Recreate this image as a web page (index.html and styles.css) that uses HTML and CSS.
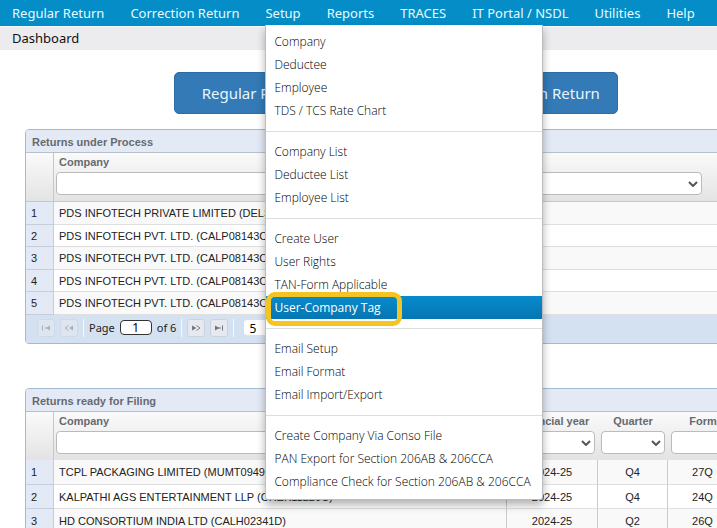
FILE: index.html
```html
<!DOCTYPE html>
<html lang="en">
<head>
<meta charset="utf-8">
<title>Dashboard</title>
<link rel="stylesheet" href="styles.css">
</head>
<body>
<nav class="topnav">
  <ul class="topnav-list">
    <li><a href="#">Regular Return</a></li>
    <li><a href="#">Correction Return</a></li>
    <li class="has-menu"><a href="#">Setup</a>
      <div class="menu">
        <ul>
          <li><a href="#">Company</a></li>
          <li><a href="#">Deductee</a></li>
          <li><a href="#">Employee</a></li>
          <li><a href="#">TDS / TCS Rate Chart</a></li>
        </ul>
        <ul>
          <li><a href="#">Company List</a></li>
          <li><a href="#">Deductee List</a></li>
          <li><a href="#">Employee List</a></li>
        </ul>
        <ul>
          <li><a href="#">Create User</a></li>
          <li><a href="#">User Rights</a></li>
          <li><a href="#">TAN-Form Applicable</a></li>
          <li><a href="#" class="active">User-Company Tag</a></li>
        </ul>
        <ul>
          <li><a href="#">Email Setup</a></li>
          <li><a href="#">Email Format</a></li>
          <li><a href="#">Email Import/Export</a></li>
        </ul>
        <ul>
          <li><a href="#">Create Company Via Conso File</a></li>
          <li><a href="#">PAN Export for Section 206AB &amp; 206CCA</a></li>
          <li><a href="#">Compliance Check for Section 206AB &amp; 206CCA</a></li>
        </ul>
      </div>
    </li>
    <li><a href="#">Reports</a></li>
    <li><a href="#">TRACES</a></li>
    <li><a href="#">IT Portal / NSDL</a></li>
    <li><a href="#">Utilities</a></li>
    <li><a href="#">Help</a></li>
  </ul>
</nav>
<header class="subbar"><h1>Dashboard</h1></header>
<div class="viewport">
<main>
  <div class="actions">
    <button type="button">Regular Return</button>
    <button type="button">Correction Return</button>
  </div>

  <section class="panel">
    <h2>Returns under Process</h2>
    <table class="process">
      <colgroup><col class="c-num"><col><col class="c-rest"></colgroup>
      <thead>
        <tr>
          <th class="num"></th>
          <th><label for="p-company">Company</label><select id="p-company"><option></option></select></th>
          <th></th>
        </tr>
      </thead>
      <tbody>
        <tr><td class="num">1</td><td>PDS INFOTECH PRIVATE LIMITED (DELS00000A)</td><td></td></tr>
        <tr><td class="num">2</td><td>PDS INFOTECH PVT. LTD. (CALP08143C)</td><td></td></tr>
        <tr><td class="num">3</td><td>PDS INFOTECH PVT. LTD. (CALP08143C)</td><td></td></tr>
        <tr><td class="num">4</td><td>PDS INFOTECH PVT. LTD. (CALP08143C)</td><td></td></tr>
        <tr><td class="num">5</td><td>PDS INFOTECH PVT. LTD. (CALP08143C)</td><td></td></tr>
      </tbody>
    </table>
    <div class="pager">
      <button type="button" disabled aria-label="First page"><svg viewBox="0 0 10 8"><path class="bar" d="M1.5 1.500v5M4 4h3"/><path d="M9 1.500v5L5 4z"/></svg></button>
      <button type="button" disabled aria-label="Previous page"><svg viewBox="0 0 10 8"><path class="bar" d="M4.500 1.500L1 4l3.500 2.500"/><path d="M9 1.500v5L5 4z"/></svg></button>
      <span class="sep"></span>
      <label for="page">Page</label>
      <input id="page" type="text" value="1">
      <span>of 6</span>
      <span class="sep"></span>
      <button type="button" aria-label="Next page"><svg viewBox="0 0 10 8"><path class="bar" d="M5.500 1.500L9 4 5.500 6.500"/><path d="M1 1.500v5L5.500 4z"/></svg></button>
      <button type="button" aria-label="Last page"><svg viewBox="0 0 10 8"><path class="bar" d="M8.500 1.500v5M4 4h3"/><path d="M1 1.500v5L5.500 4z"/></svg></button>
      <span class="sep"></span>
      <select class="size" aria-label="Rows per page"><option>5</option></select>
    </div>
  </section>

  <section class="panel">
    <h2>Returns ready for Filing</h2>
    <table class="filing">
      <colgroup><col class="c-num"><col><col class="c-year"><col class="c-short"><col class="c-short"><col class="c-edge"></colgroup>
      <thead>
        <tr>
          <th class="num"></th>
          <th><label for="f-company">Company</label><select id="f-company"><option></option></select></th>
          <th><label for="f-year">Financial year</label><select id="f-year"><option></option></select></th>
          <th><label for="f-quarter">Quarter</label><select id="f-quarter"><option></option></select></th>
          <th><label for="f-form">Form</label><select id="f-form"><option></option></select></th>
          <th></th>
        </tr>
      </thead>
      <tbody>
        <tr><td class="num">1</td><td>TCPL PACKAGING LIMITED (MUMT09495E)</td><td>2024-25</td><td>Q4</td><td>27Q</td><td></td></tr>
        <tr><td class="num">2</td><td>KALPATHI AGS ENTERTAINMENT LLP (CHEK11220C)</td><td>2024-25</td><td>Q4</td><td>24Q</td><td></td></tr>
        <tr><td class="num">3</td><td>HD CONSORTIUM INDIA LTD (CALH02341D)</td><td>2024-25</td><td>Q2</td><td>26Q</td><td></td></tr>
      </tbody>
    </table>
  </section>
</main>
</div>
</body>
</html>
```
FILE: styles.css
```css
*, *::after { box-sizing: border-box; }
html { height: 100%; overflow: hidden; }
body {
  display: flex;
  flex-direction: column;
  height: 100%;
  margin: 0;
  background: #fff;
  color: #222;
  font-family: "Noto Sans", "Open Sans", sans-serif;
  font-size: 13px;
}
ul { list-style: none; margin: 0; padding: 0; }
a { color: inherit; text-decoration: none; }

.topnav { flex: none; background: #048dc6; color: #e6fbff; height: 26px; }
.topnav-list { display: flex; gap: 26px; padding: 0 12px; }
.topnav-list > li > a { display: block; line-height: 26px; white-space: nowrap; }
.has-menu { position: relative; }

.menu {
  position: absolute;
  z-index: 5;
  top: 25px;
  left: 0;
  width: 278px;
  padding: 5px 0 6px;
  background: #fff;
  border: 1px solid #b9bcc0;
  border-top: 0;
  border-radius: 0 0 3px 3px;
  box-shadow: 0 5px 9px rgba(0, 0, 0, .3);
  color: #000;
  font-family: "Open Sans", "Noto Sans", sans-serif;
  font-size: 12px;
  font-weight: 300;
}
.menu ul + ul { margin-top: 9px; padding-top: 8px; border-top: 1px solid #dcdee0; }
.menu a { display: block; position: relative; padding-left: 8px; line-height: 23px; white-space: nowrap; }
.menu .active { background: linear-gradient(#088bcb, #0675b3); color: #fff; font-weight: 400; }
.menu .active::after {
  content: "";
  position: absolute;
  left: 0;
  top: -4px;
  width: 136px;
  height: 34px;
  border: 5px solid #f4c522;
  border-radius: 9px;
}

.subbar { flex: none; background: #ececee; border-top: 1px solid #f4f9fb; }
.subbar h1 { margin: 0; padding-left: 12px; font-size: 13px; font-weight: 400; line-height: 23px; color: #111; }

.viewport { flex: 1; min-height: 0; overflow: hidden; }
main { margin: 0 -50px 0 25px; padding-top: 22px; }

.actions { display: flex; justify-content: center; gap: 120px; margin-bottom: 15px; }
.actions button {
  width: 162px;
  height: 42px;
  padding: 0;
  border: 1px solid #2e6da4;
  border-radius: 5px;
  background: #337ab7;
  color: #e6f6ff;
  font: 15px "Noto Sans", sans-serif;
  white-space: nowrap;
}

.panel {
  border: 1px solid #a5b9d0;
  border-radius: 4px;
  overflow: hidden;
  margin-bottom: 44px;
  font-family: "Liberation Sans", Arial, sans-serif;
  font-size: 11px;
}
.panel h2 {
  margin: 0;
  padding-left: 6px;
  height: 23px;
  line-height: 24px;
  font-size: 11px;
  color: #666a70;
  background: #e3eaf5;
  border-bottom: 1px solid #b8c0ca;
}
table { width: 100%; table-layout: fixed; border-collapse: separate; border-spacing: 0; }
.c-num { width: 28px; }
.c-rest { width: 62px; }
.c-year { width: 91px; }
.c-short { width: 70px; }
.c-edge { width: 28px; }
thead tr { background: linear-gradient(#fafafa, #e3e3e3); }
th {
  height: 49px;
  padding: 0 2px;
  vertical-align: top;
  text-align: left;
  color: #666a70;
  border-bottom: 1px solid #c3c8ce;
}
.filing th { height: 48px; border-bottom: 0; }
th.num { border-right: 1px solid #c3c8ce; }
th label { display: block; line-height: 19px; padding-left: 3px; }
th select {
  display: block;
  width: 100%;
  height: 23px;
  appearance: none;
  border: 1px solid #bbb;
  border-radius: 4px;
  background: #fff url("data:image/svg+xml,%3Csvg xmlns='http://www.w3.org/2000/svg' viewBox='0 0 10 6'%3E%3Cpath d='M1 1l4 4 4-4' fill='none' stroke='%23555' stroke-width='2'/%3E%3C/svg%3E") no-repeat right 3px center / 10px 6px;
}
.filing th:nth-child(n+3) { padding: 0 3px; }
.filing th:nth-child(n+3) label { text-align: center; padding: 0; }
td {
  height: 22px;
  padding: 0 5px;
  border-bottom: 1px solid #dfdfdf;
  white-space: nowrap;
  overflow: hidden;
}
.process tr:nth-child(odd) td { height: 23px; }
.filing td { height: 24px; border-right: 1px solid #c8cbd0; }
.filing tr:nth-child(odd) td { height: 25px; }
.filing td:nth-child(n+3) { text-align: center; }
tbody tr:nth-child(odd) { background: #f9f9f9; }
td.num { background: #e3eaf5; border-right: 1px solid #c3cddb; border-bottom-color: #c3cddb; }

.pager {
  display: flex;
  align-items: center;
  gap: 5px;
  height: 28px;
  padding: 0 0 3px 11px;
  background: #d4e1f0;
  font-family: "Noto Sans", sans-serif;
  font-size: 11px;
}
.pager .sep { width: 1px; height: 18px; background: #f5f9fd; }
.pager button {
  width: 18px;
  height: 18px;
  padding: 0;
  display: grid;
  place-items: center;
  border: 1px solid #cdd3db;
  border-radius: 3px;
  background: #e6eaf0;
}
.pager button:disabled { opacity: .45; }
.pager svg { width: 10px; height: 8px; fill: #777; }
.pager .bar { fill: none; stroke: #777; }
.pager input {
  width: 32px;
  height: 15px;
  padding: 0;
  border: 1px solid #333;
  border-radius: 4px;
  background: #fff;
  text-align: center;
  font: 12px "Noto Sans", sans-serif;
}
.pager .size {
  appearance: none;
  width: 50px;
  height: 15px;
  margin-left: 5px;
  padding: 0 5px;
  border: 0;
  border-radius: 3px;
  background: #fff;
  font: 12px "Noto Sans", sans-serif;
}
```
